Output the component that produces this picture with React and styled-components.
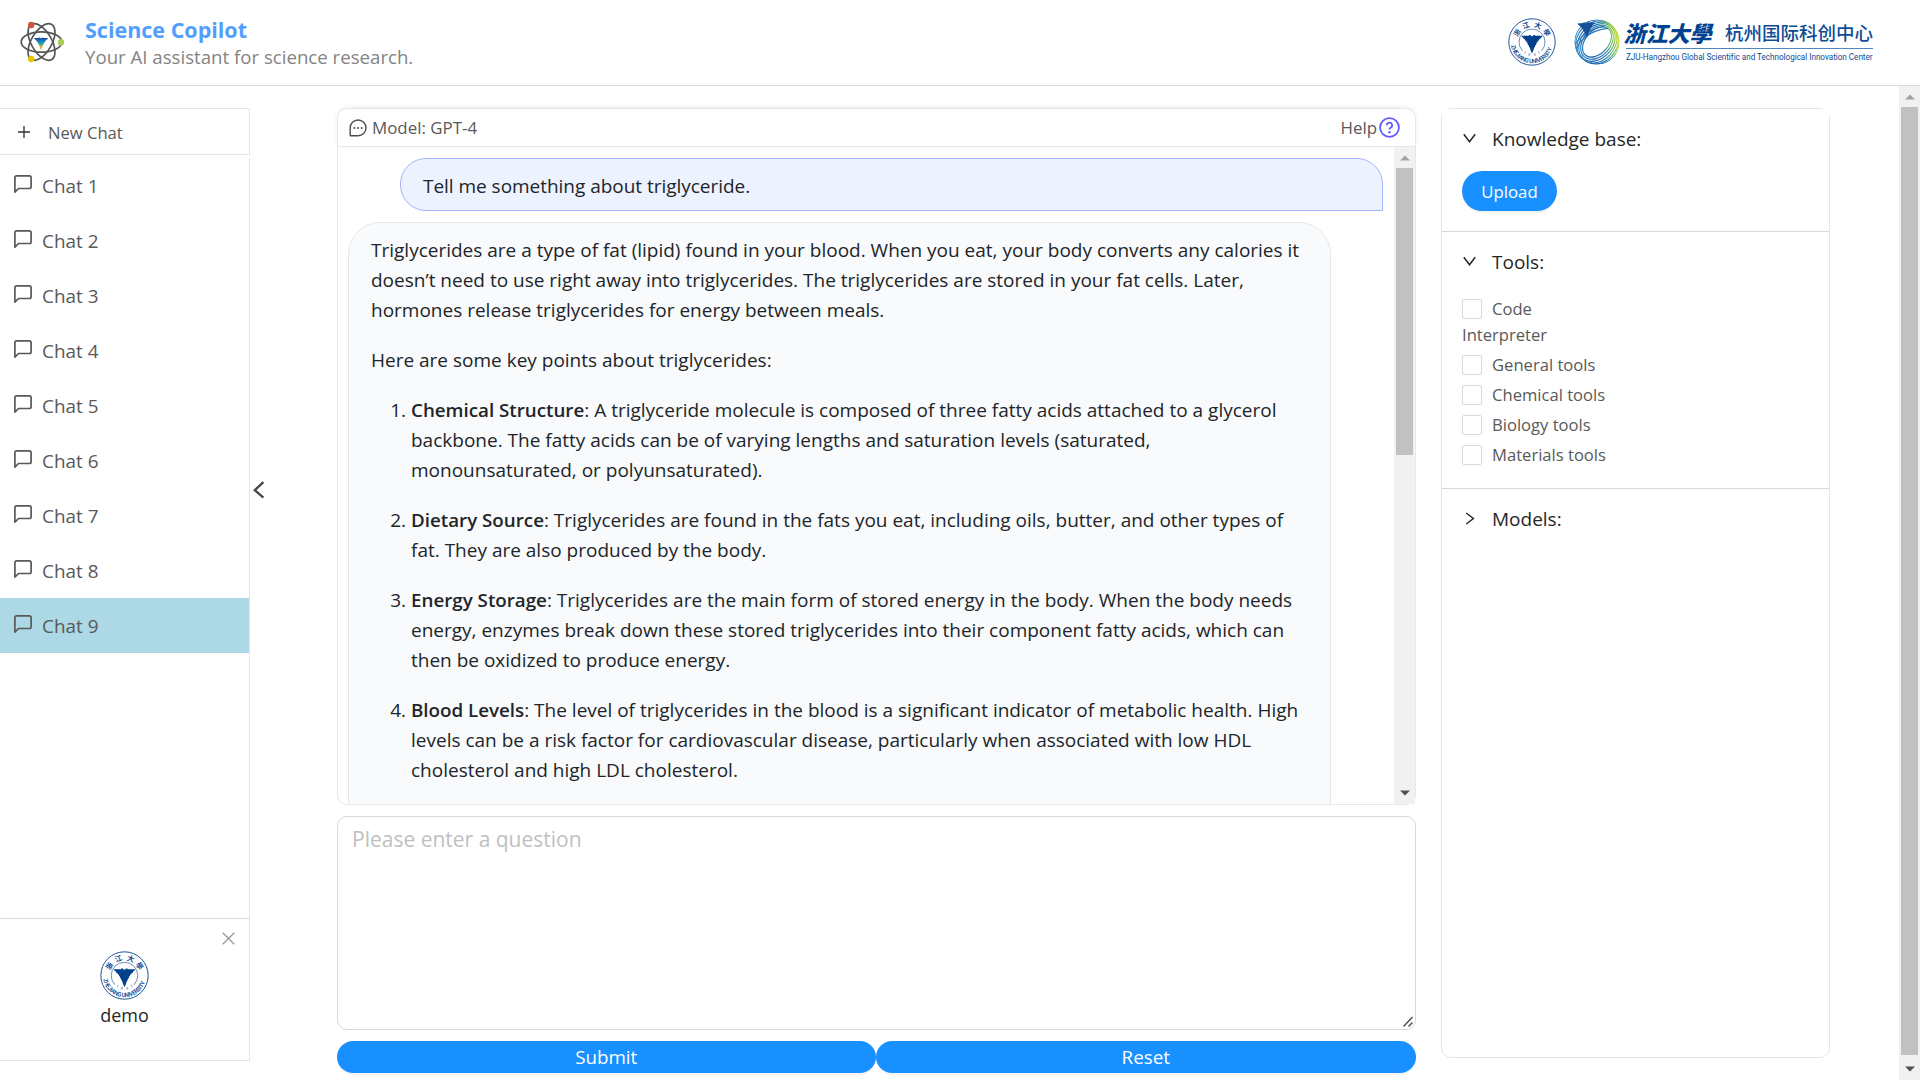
import React from "react";
import styled, { createGlobalStyle, css } from "styled-components";

const GlobalStyle = createGlobalStyle`
  * { box-sizing: border-box; }
  html, body { margin: 0; padding: 0; }
  body {
    background: #fff;
    color: #212529;
    font-family: "Open Sans", "Noto Sans", sans-serif;
    overflow: hidden;
  }
`;

const Page = styled.div`
  display: flex;
  flex-direction: column;
  width: 1920px;
  height: 1080px;
  background: #fff;
  overflow: hidden;
`;

/* ---------- header ---------- */

const Header = styled.header`
  display: flex;
  align-items: center;
  height: 86px;
  flex: none;
  padding: 0 47px 2px 19px;
  border-bottom: 1px solid #d9d9d9;
`;

const Titles = styled.div`
  margin-left: 20px;
  padding-top: 2px;
  flex: 1;
`;

const AppTitle = styled.div`
  font-size: 21.5px;
  font-weight: 700;
  line-height: 27px;
  color: #519eff;
`;

const Subtitle = styled.div`
  font-size: 18.65px;
  line-height: 27px;
  color: #848484;
`;

const CenterLogo = styled.div`
  display: flex;
  align-items: center;
  gap: 6px;
  margin-left: 18px;
`;

const LogoText = styled.div`
  display: flex;
  flex-direction: column;
  width: 247px;
  color: #0f4c94;
`;

const LogoNames = styled.div`
  display: flex;
  align-items: center;
  justify-content: space-between;
  height: 30px;
  padding-bottom: 3px;
  border-bottom: 1px solid #4f86bd;
  font-family: "Noto Sans CJK SC", sans-serif;
  white-space: nowrap;
`;

const Calligraphy = styled.span`
  font-size: 22px;
  font-weight: 900;
  line-height: 26px;
  color: #004290;
  transform: skewX(-14deg);
`;

const CenterName = styled.span`
  font-size: 18.5px;
  font-weight: 500;
  line-height: 26px;
`;

const LogoEnglish = styled.div`
  padding-top: 2px;
  font-family: Roboto, sans-serif;
  font-size: 8.15px;
  line-height: 13px;
  letter-spacing: -0.02px;
  white-space: nowrap;
`;

/* ---------- body ---------- */

const Body = styled.div`
  display: flex;
  flex: 1;
  min-height: 0;
`;

const Sidebar = styled.aside`
  display: flex;
  flex-direction: column;
  width: 250px;
  height: 975px;
  flex: none;
  padding-top: 22px;
`;

const NewChat = styled.div`
  display: flex;
  align-items: center;
  gap: 18px;
  height: 47px;
  padding: 1px 0 0 18px;
  margin-bottom: 3px;
  border: 1px solid #e5e5e5;
  border-left: 0;
  font-size: 16.6px;
  color: #595959;

  svg {
    margin-bottom: 1px;
  }
`;

const ChatList = styled.div`
  flex: 1;
  border-right: 1px solid #e5e5e5;
`;

const ChatItem = styled.div`
  display: flex;
  align-items: center;
  gap: 10px;
  height: 55px;
  padding: 1px 0 0 14px;
  font-size: 18.9px;
  color: #595959;
  background: ${(p) => (p.$active ? "#add8e6" : "transparent")};

  svg {
    margin-bottom: 4px;
  }
`;

const UserCard = styled.div`
  position: relative;
  display: flex;
  flex-direction: column;
  align-items: center;
  height: 143px;
  padding-top: 32px;
  border: 1px solid #e5e5e5;
  border-left: 0;
  border-top-color: #d9d9d9;
`;

const UserName = styled.div`
  font-size: 18px;
  line-height: 30px;
  color: #262626;
`;

const CloseButton = styled.span`
  position: absolute;
  top: 13px;
  right: 14px;
  display: flex;
`;

const Gutter = styled.div`
  display: flex;
  align-items: center;
  width: 87px;
  flex: none;
  padding: 0 0 187px 3px;
`;

const Main = styled.main`
  display: flex;
  flex-direction: column;
  width: 1079px;
  flex: none;
  padding-top: 22px;
`;

const ModelBar = styled.div`
  display: flex;
  align-items: center;
  justify-content: space-between;
  height: 39px;
  padding: 0 15px 0 11px;
  border: 1px solid #e5e7eb;
  border-top-color: #e5e5e5;
  border-radius: 10px 10px 0 0;
  box-shadow: 0 -1px 4px rgba(0, 0, 0, 0.07);
`;

const BarGroup = styled.div`
  display: flex;
  align-items: center;
  gap: ${(p) => p.$gap}px;
  font-size: 16.9px;
  color: #595959;
`;

const Conversation = styled.div`
  display: flex;
  height: 658px;
  border: 1px solid #e5e7eb;
  border-top: 0;
  border-radius: 0 0 10px 10px;
`;

const Messages = styled.div`
  flex: 1;
  padding: 11px 11px 0 10px;
  overflow: hidden;
  border-radius: 0 0 0 9px;
`;

const bubble = css`
  width: 983px;
  border: 1px solid;
  color: #212529;
  font-size: 19px;
  line-height: 30px;
`;

const UserBubble = styled.div`
  ${bubble}
  height: 53px;
  margin-left: auto;
  padding: 12px 22px 0;
  background: #edf2ff;
  border-color: #a5b4fc;
  border-radius: 26px 26px 0 26px;
  letter-spacing: -0.03px;
`;

const BotBubble = styled.div`
  ${bubble}
  height: 700px;
  margin-top: 11px;
  padding: 12px 22px 0;
  background: #f8fafc;
  border-color: #e5e7eb;
  border-radius: 32px;
  white-space: pre;
`;

const Paragraph = styled.p`
  margin: 0 0 20px;
`;

const Points = styled.ol`
  margin: 0;
  padding-left: 40px;
`;

const Point = styled.li`
  margin-bottom: 20px;
`;

const Term = styled.strong`
  font-size: 18.75px;
  font-weight: 600;
`;

const QuestionBox = styled.div`
  position: relative;
  margin: 11px 0;
`;

const Question = styled.textarea`
  display: block;
  width: 100%;
  height: 214px;
  padding: 6px 13px 6px 14px;
  border: 1px solid #d9d9d9;
  border-radius: 10px;
  outline: none;
  resize: none;
  font-family: inherit;
  font-size: 21px;
  line-height: 32px;

  &::placeholder {
    color: #bfbfbf;
  }
`;

const ResizeGrip = styled.svg`
  position: absolute;
  right: 2px;
  bottom: 2px;
`;

const Actions = styled.div`
  display: flex;
`;

const Button = styled.button`
  padding: 0;
  border: 0;
  background: #1890ff;
  color: #fff;
  font-family: inherit;
  text-align: center;
  box-shadow: 0 2px 0 rgba(0, 0, 0, 0.045);
`;

const ActionButton = styled(Button)`
  flex: ${(p) => p.$grow};
  height: 32px;
  padding-top: 1px;
  border-radius: 16px;
  font-size: 18.8px;
  line-height: 31px;
`;

const UploadButton = styled(Button)`
  display: block;
  width: 95px;
  height: 40px;
  margin-top: 17px;
  border-radius: 20px;
  font-size: 16.8px;
`;

/* ---------- right panel ---------- */

const Panel = styled.section`
  width: 389px;
  height: 950px;
  flex: none;
  margin: 22px 69px 0 25px;
  border: 1px solid #e5e5e5;
  border-radius: 10px;
`;

const Section = styled.div`
  height: ${(p) => p.$height}px;
  padding: 15px 20px 0;
  background: #fff;
  border-bottom: ${(p) => (p.$last ? "0" : "1px solid #d9d9d9")};
`;

const SectionTitle = styled.div`
  display: flex;
  align-items: center;
  gap: 15px;
  font-size: 19px;
  line-height: 30px;
  color: #262626;
`;

const ToolList = styled.div`
  padding-top: 17px;
  font-size: 16.6px;
  line-height: 22px;
  color: #595959;
`;

const ToolRow = styled.label`
  display: flex;
  align-items: center;
  gap: 10px;
  height: 30px;
`;

const WrappedLabel = styled.div`
  padding-bottom: 4px;
`;

const Checkbox = styled.span`
  width: 20px;
  height: 20px;
  border: 1px solid #d9d9d9;
  border-radius: 2px;
  background: #fff;
`;

/* ---------- scrollbars ---------- */

const Track = styled.div`
  display: flex;
  flex-direction: column;
  align-items: center;
  justify-content: space-between;
  width: 21px;
  height: 100%;
  flex: none;
  background: #f1f1f1;
`;

const Thumb = styled.div`
  width: 17px;
  height: ${(p) => p.$size}px;
  margin-bottom: auto;
  background: #c1c1c1;
`;

const TrackEnd = styled.div`
  display: flex;
  align-items: center;
  justify-content: center;
  height: 21px;
  padding-bottom: ${(p) => (p.$bottom ? 2 : 0)}px;
`;

function Scrollbar({ size }) {
  return (
    <Track>
      <TrackEnd>
        <svg width="10" height="6"><path d="M0 5.5L5 .5l5 5z" fill="#a3a3a3" /></svg>
      </TrackEnd>
      <Thumb $size={size} />
      <TrackEnd $bottom>
        <svg width="10" height="6"><path d="M0 .5h10l-5 5z" fill="#505050" /></svg>
      </TrackEnd>
    </Track>
  );
}

/* ---------- drawings ---------- */

const EAGLE =
  "M-11 -6.4H-3.4L-3 -7.6L-1.6 -7L0 -5.6L1.8 -7.2L2.8 -7.2L3.4 -6.4H11L10 -4.6H9L8.6 -2.9H7.4L7 -1.2H6L5.4 .8H4.8L4.2 3H3.6L3 5.2L2.2 6L1.5 8.6L0 12L-1.5 8.6L-2.2 6L-3 5.2L-3.6 3H-4.2L-4.8 .8H-5.4L-6 -1.2H-7L-7.4 -2.9H-8.6L-9 -4.6H-10Z";

function Seal({ size, id }) {
  const marks = [["浙", -58], ["江", -20], ["大", 20], ["學", 58]];
  return (
    <svg width={size} height={size} viewBox="-24 -24 48 48">
      <circle r="23.2" fill="#fff" stroke="#0b4590" strokeWidth="0.9" />
      <circle r="13" fill="none" stroke="#0b4590" strokeWidth="0.6" pathLength="100" strokeDasharray="12 26 62 0" />
      <path d={EAGLE} fill="#00408c" transform="scale(.96)" />
      {marks.map(([c, a]) => (
        <text
          key={c}
          transform={`rotate(${a}) translate(0 -15)`}
          textAnchor="middle"
          fontFamily="'Noto Sans CJK SC', sans-serif"
          fontWeight="700"
          fontSize="7"
          fill="#0b4590"
        >
          {c}
        </text>
      ))}
      <path id={id} d="M-20.8 3.6A21.1 21.1 0 0 0 20.8 3.6" fill="none" />
      <text fontFamily="Roboto, sans-serif" fontWeight="500" fontSize="6" fill="#0b4590" textLength="56" lengthAdjust="spacing">
        <textPath href={`#${id}`}>ZHEJIANG UNIVERSITY</textPath>
      </text>
      {[["1", 33], ["8", 12], ["9", -12], ["7", -33]].map(([d, a]) => (
        <text
          key={d}
          transform={`rotate(${a}) translate(0 14)`}
          textAnchor="middle"
          fontFamily="Roboto, sans-serif"
          fontSize="3.6"
          fill="#0b4590"
        >
          {d}
        </text>
      ))}
    </svg>
  );
}

function AtomLogo() {
  return (
    <svg width="46" height="44" viewBox="-22.5 -22 46 44">
      <defs>
        <linearGradient id="eagleTint" x1="0" y1="0" x2="0" y2="1">
          <stop offset="0.1" stopColor="#1d4fa0" />
          <stop offset="0.38" stopColor="#1492c4" />
          <stop offset="0.6" stopColor="#4cb08a" />
          <stop offset="0.75" stopColor="#f4b51e" />
          <stop offset="1" stopColor="#f08a1c" />
        </linearGradient>
      </defs>
      {[0, 60, 120].map((a) => (
        <ellipse key={a} rx="20.3" ry="10.2" transform={`rotate(${a})`} fill="none" stroke="#555" strokeWidth="1.7" />
      ))}
      <path d={EAGLE} fill="url(#eagleTint)" transform="translate(-.5 .2) scale(.64)" />
      <circle cx="-10.3" cy="-17" r="3.2" fill="#d1523c" />
      <circle cx="19.5" cy="0.3" r="3.2" fill="#a5cf52" />
      <circle cx="-10.3" cy="17" r="3.2" fill="#e6c700" />
    </svg>
  );
}

function GlobeLogo() {
  const rings = [
    [17.5, 11.5, 0], [19.3, 13.5, 0.3], [21, 15.6, 0.5], [22.3, 17.8, 0.6], [22.6, 20.2, 0.4], [22.2, 22.2, 0],
  ];
  return (
    <svg width="46" height="46" viewBox="-23 -23 46 46">
      <defs>
        <linearGradient id="globeTint" gradientUnits="userSpaceOnUse" x1="-18" y1="-13" x2="18" y2="13">
          <stop offset="0" stopColor="#2a94d2" />
          <stop offset="0.3" stopColor="#1a5ca3" />
          <stop offset="0.62" stopColor="#2278b4" />
          <stop offset="0.82" stopColor="#6cba6a" />
          <stop offset="1" stopColor="#c9de2c" />
        </linearGradient>
        <clipPath id="globeClip"><circle r="22.6" /></clipPath>
      </defs>
      <g clipPath="url(#globeClip)" fill="none" stroke="url(#globeTint)" strokeWidth="1.15">
        {rings.map(([rx, ry, dy]) => (
          <ellipse key={rx} rx={rx} ry={ry} transform={`translate(0 ${dy}) rotate(-48)`} />
        ))}
        <path d="M-22 2C-14 -8 -4 -14 8 -16M-21 7C-15 -5 -4 -12 11 -13.6" stroke="#2a78ba" />
      </g>
      <path d={EAGLE} fill="#174f97" transform="translate(-10.5 -14) rotate(-4) scale(.8)" />
    </svg>
  );
}

function ChatIcon() {
  return (
    <svg width="18" height="18" viewBox="2 2 20 20" fill="none" stroke="currentColor" strokeWidth="1.9" strokeLinejoin="round">
      <path d="M21 15a2 2 0 0 1-2 2H7l-4 4V5a2 2 0 0 1 2-2h14a2 2 0 0 1 2 2z" />
    </svg>
  );
}

function ModelIcon() {
  return (
    <svg width="18" height="18" viewBox="0 0 18 18" fill="none" stroke="#4d4d4d" strokeWidth="1.4">
      <path d="M1.2 16.8V9A7.9 7.9 0 1 1 9 16.8Z" strokeLinejoin="round" />
      <g fill="#4d4d4d" stroke="none">
        <circle cx="5.4" cy="9" r="1" />
        <circle cx="9" cy="9" r="1" />
        <circle cx="12.6" cy="9" r="1" />
      </g>
    </svg>
  );
}

function HelpIcon() {
  return (
    <svg width="21" height="21" viewBox="0 0 21 21" fill="none" stroke="#635bff" strokeWidth="1.8">
      <circle cx="10.5" cy="10.5" r="9.4" />
      <path d="M7.9 8.3A2.6 2.6 0 1 1 11.6 10.6Q10.5 11.2 10.5 12.6" />
      <circle cx="10.5" cy="15.2" r="1.2" fill="#635bff" stroke="none" />
    </svg>
  );
}

function Chevron({ open }) {
  return (
    <svg width="15" height="14" viewBox="0 0 15 14" fill="none" stroke="#262626" strokeWidth="1.5">
      <path d={open ? "M1.8 2.2L7.5 9.8L13.2 2.2" : "M4.2 1L11.4 6.5L4.2 12"} />
    </svg>
  );
}

/* ---------- content ---------- */

const CHATS = [1, 2, 3, 4, 5, 6, 7, 8, 9];
const TOOLS = ["General tools", "Chemical tools", "Biology tools", "Materials tools"];
const INTRO =
  "Triglycerides are a type of fat (lipid) found in your blood. When you eat, your body converts any calories it\ndoesn’t need to use right away into triglycerides. The triglycerides are stored in your fat cells. Later,\nhormones release triglycerides for energy between meals.";
const POINTS = [
  ["Chemical Structure", ": A triglyceride molecule is composed of three fatty acids attached to a glycerol\nbackbone. The fatty acids can be of varying lengths and saturation levels (saturated,\nmonounsaturated, or polyunsaturated)."],
  ["Dietary Source", ": Triglycerides are found in the fats you eat, including oils, butter, and other types of\nfat. They are also produced by the body."],
  ["Energy Storage", ": Triglycerides are the main form of stored energy in the body. When the body needs\nenergy, enzymes break down these stored triglycerides into their component fatty acids, which can\nthen be oxidized to produce energy."],
  ["Blood Levels", ": The level of triglycerides in the blood is a significant indicator of metabolic health. High\nlevels can be a risk factor for cardiovascular disease, particularly when associated with low HDL\ncholesterol and high LDL cholesterol."],
];

export default function App() {
  return (
    <Page>
      <GlobalStyle />
      <Header>
        <AtomLogo />
        <Titles>
          <AppTitle>Science Copilot</AppTitle>
          <Subtitle>Your AI assistant for science research.</Subtitle>
        </Titles>
        <Seal size={48} id="sealTop" />
        <CenterLogo>
          <GlobeLogo />
          <LogoText>
            <LogoNames>
              <Calligraphy>浙江大學</Calligraphy>
              <CenterName>杭州国际科创中心</CenterName>
            </LogoNames>
            <LogoEnglish>ZJU-Hangzhou Global Scientific and Technological Innovation Center</LogoEnglish>
          </LogoText>
        </CenterLogo>
      </Header>

      <Body>
        <Sidebar>
          <NewChat>
            <svg width="12" height="12" stroke="#333" strokeWidth="1.3"><path d="M6 0v12M0 6h12" /></svg>
            New Chat
          </NewChat>
          <ChatList>
            {CHATS.map((n) => (
              <ChatItem key={n} $active={n === 9}>
                <ChatIcon />
                Chat {n}
              </ChatItem>
            ))}
          </ChatList>
          <UserCard>
            <CloseButton>
              <svg width="13" height="13" stroke="#999" strokeWidth="1.3"><path d="M.7.7l11.6 11.6M12.3.7L.7 12.3" /></svg>
            </CloseButton>
            <Seal size={49} id="sealUser" />
            <UserName>demo</UserName>
          </UserCard>
        </Sidebar>

        <Gutter>
          <svg width="12" height="18" viewBox="0 0 12 18" fill="none" stroke="#4a4a4a" strokeWidth="2.4">
            <path d="M10.4 1.2L1.8 9.2L10.4 16.6" />
          </svg>
        </Gutter>

        <Main>
          <ModelBar>
            <BarGroup $gap={5}><ModelIcon />Model: GPT-4</BarGroup>
            <BarGroup $gap={2}>Help<HelpIcon /></BarGroup>
          </ModelBar>
          <Conversation>
            <Messages>
              <UserBubble>Tell me something about triglyceride.</UserBubble>
              <BotBubble>
                <Paragraph>{INTRO}</Paragraph>
                <Paragraph>Here are some key points about triglycerides:</Paragraph>
                <Points>
                  {POINTS.map(([term, text]) => (
                    <Point key={term}><Term>{term}</Term>{text}</Point>
                  ))}
                </Points>
              </BotBubble>
            </Messages>
            <Scrollbar size={287} />
          </Conversation>
          <QuestionBox>
            <Question placeholder="Please enter a question" />
            <ResizeGrip width="12" height="12" stroke="#505050" strokeWidth="1.5">
              <path d="M1.5 10.5L10.5 1M6.5 10.5L10.5 6.5" />
            </ResizeGrip>
          </QuestionBox>
          <Actions>
            <ActionButton $grow={538.5}>Submit</ActionButton>
            <ActionButton $grow={540.5}>Reset</ActionButton>
          </Actions>
        </Main>

        <Panel>
          <Section $height={123}>
            <SectionTitle><Chevron open />Knowledge base:</SectionTitle>
            <UploadButton>Upload</UploadButton>
          </Section>
          <Section $height={257}>
            <SectionTitle><Chevron open />Tools:</SectionTitle>
            <ToolList>
              <ToolRow><Checkbox />Code</ToolRow>
              <WrappedLabel>Interpreter</WrappedLabel>
              {TOOLS.map((t) => (
                <ToolRow key={t}><Checkbox />{t}</ToolRow>
              ))}
            </ToolList>
          </Section>
          <Section $height={60} $last>
            <SectionTitle><Chevron />Models:</SectionTitle>
          </Section>
        </Panel>
        <Scrollbar size={948} />
      </Body>
    </Page>
  );
}
